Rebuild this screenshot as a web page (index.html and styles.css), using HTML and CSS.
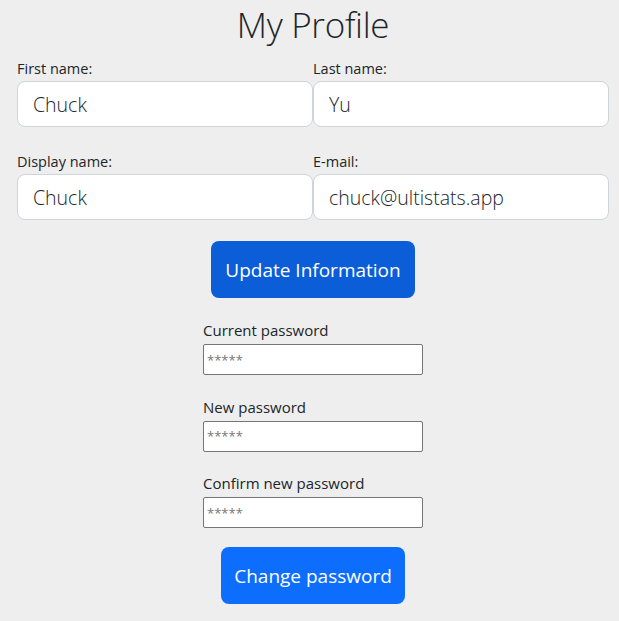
FILE: index.html
```html
<!DOCTYPE html>
<html lang="en">
<head>
<meta charset="utf-8">
<title>My Profile</title>
<link rel="stylesheet" href="styles.css">
</head>
<body>
<main class="page">
  <h1 class="title">My Profile</h1>
  <form class="info-form">
    <div class="grid">
      <div class="field">
        <label class="field-label" for="first">First name:</label>
        <input class="field-input" id="first" type="text" value="Chuck">
      </div>
      <div class="field">
        <label class="field-label" for="last">Last name:</label>
        <input class="field-input" id="last" type="text" value="Yu">
      </div>
      <div class="field">
        <label class="field-label" for="display">Display name:</label>
        <input class="field-input" id="display" type="text" value="Chuck">
      </div>
      <div class="field">
        <label class="field-label" for="email">E-mail:</label>
        <input class="field-input" id="email" type="email" value="chuck@ultistats.app">
      </div>
    </div>
    <button type="button" class="btn btn-update">Update Information</button>
  </form>
  <form class="pw-form">
    <div class="pw-group">
      <label class="pw-label" for="cur">Current password</label>
      <input class="pw-input" id="cur" type="password" placeholder="*****">
    </div>
    <div class="pw-group">
      <label class="pw-label" for="new">New password</label>
      <input class="pw-input" id="new" type="password" placeholder="*****">
    </div>
    <div class="pw-group">
      <label class="pw-label" for="conf">Confirm new password</label>
      <input class="pw-input" id="conf" type="password" placeholder="*****">
    </div>
    <button type="button" class="btn btn-change">Change password</button>
  </form>
</main>
</body>
</html>
```
FILE: styles.css
```css
* { box-sizing: border-box; }
html, body {
  margin: 0;
  padding: 0;
  background: #eeeeee;
}
body {
  font-family: "Open Sans", "Noto Sans", sans-serif;
  color: #212529;
}
.page {
  width: 592px;
  margin-left: 17px;
  display: flex;
  flex-direction: column;
  align-items: center;
}
.title {
  margin: 3px 0 0;
  height: 44px;
  font-size: 35px;
  line-height: 44px;
  font-weight: 300;
  letter-spacing: -0.3px;
}
.info-form {
  width: 100%;
  display: flex;
  flex-direction: column;
  align-items: center;
  margin-top: 11px;
}
.grid {
  width: 100%;
  display: grid;
  grid-template-columns: 1fr 1fr;
  column-gap: 0;
  row-gap: 24px;
}
.field {
  display: flex;
  flex-direction: column;
}
.field-label {
  font-size: 14.5px;
  font-weight: 500;
  line-height: 22px;
  height: 22px;
  margin-bottom: 1px;
}
.field-input {
  height: 46px;
  width: 100%;
  border: 1px solid #cfd4da;
  border-radius: 8px;
  background: #fff;
  padding: 0 15px;
  font-family: inherit;
  font-size: 19.5px;
  font-weight: 300;
  color: #212529;
  outline: none;
}
.btn {
  border: none;
  border-radius: 8px;
  color: #fff;
  font-family: inherit;
  font-size: 19px;
  font-weight: 400;
  height: 57px;
  cursor: pointer;
}
.btn-update {
  margin-top: 21px;
  width: 204px;
  background: #0b5ed7;
}
.pw-form {
  display: flex;
  flex-direction: column;
  align-items: center;
  margin-top: 21px;
}
.pw-group {
  display: flex;
  flex-direction: column;
  width: 220px;
  margin-bottom: 20.5px;
}
.pw-label {
  font-size: 15px;
  line-height: 22px;
  height: 22px;
  margin-bottom: 3px;
}
.pw-input {
  width: 220px;
  height: 31px;
  border: 1px solid #767676;
  border-radius: 2px;
  background: #fff;
  padding: 1px 3px;
  font-family: inherit;
  font-size: 13px;
  outline: none;
}
.pw-input::placeholder {
  color: #777;
}
.btn-change {
  margin-top: -1.5px;
  width: 184px;
  background: #0d6efd;
}
```
